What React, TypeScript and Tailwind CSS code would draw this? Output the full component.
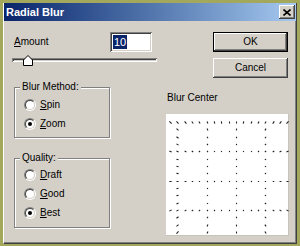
import React from 'react';

const raised =
  'shadow-[inset_-1px_-1px_#404040,inset_1px_1px_#ffffff,inset_-2px_-2px_#808080,inset_2px_2px_#d4d0c8]';
const sunken =
  'shadow-[inset_1px_1px_#808080,inset_-1px_-1px_#ffffff,inset_2px_2px_#404040,inset_-2px_-2px_#d4d0c8]';

function Radio({ checked }: { checked?: boolean }) {
  return (
    <span className="w-[12px] h-[12px] rounded-full border border-t-[#808080] border-l-[#808080] border-r-white border-b-white flex shrink-0">
      <span className="flex-1 rounded-full border border-t-[#404040] border-l-[#404040] border-r-[#d4d0c8] border-b-[#d4d0c8] bg-white flex items-center justify-center">
        {checked && <span className="w-[4px] h-[4px] rounded-full bg-black" />}
      </span>
    </span>
  );
}

function Option({ label, hot, checked }: { label: string; hot: string; checked?: boolean }) {
  return (
    <div className="h-[19px] flex items-center pl-[9px] gap-[4px]">
      <Radio checked={checked} />
      <span>
        <span className="underline underline-offset-[1px]">{hot}</span>
        {label.slice(1)}
      </span>
    </div>
  );
}

// Radial streak preview: dotted grid, each mark points away from the centre
function BlurPreview() {
  const cx = 66;
  const cy = 64;
  const step = 22 / 3;
  const pts: { x: number; y: number }[] = [];
  for (let r = 0; r < 4; r++)
    for (let i = 0; i < 17; i++) pts.push({ x: 4 + step * i, y: 8 + 4 * step * r });
  for (let c = 0; c < 4; c++)
    for (let j = 0; j < 16; j++) {
      if (j % 4 === 0) continue;
      pts.push({ x: 4 + step * (1 + 4 * c), y: 8 + step * j });
    }

  return (
    <svg width="123" height="122" viewBox="0 0 123 122">
      {pts.map((p, k) => {
        const x = Math.round(p.x) + 0.5;
        const y = Math.round(p.y) + 0.5;
        const dx = x - cx;
        const dy = y - cy;
        const d = Math.hypot(dx, dy) || 1;
        const len = Math.max(1.2, d * 0.038);
        const ux = (dx / d) * (len / 2);
        const uy = (dy / d) * (len / 2);
        return (
          <line
            key={k}
            x1={x - ux}
            y1={y - uy}
            x2={x + ux}
            y2={y + uy}
            stroke="#202020"
            strokeWidth="1.1"
          />
        );
      })}
    </svg>
  );
}

export default function App() {
  return (
    <div className="w-[300px] h-[246px] bg-[#a4a85c] pl-[3px] pt-[3px] font-['Liberation_Sans',Arial,sans-serif] text-[10px] leading-[12px] text-black">
      <div className="w-[294px] h-[241px] bg-[#d4d0c8] flex flex-col border-l border-l-white border-r border-r-[#404040] border-b border-b-[#404040] shadow-[inset_-1px_-1px_#808080]">
        {/* Title bar */}
        <div className="h-[18px] flex items-center bg-linear-to-r from-[#0a246a] to-[#a6caf0] pl-[2px] pr-[1px]">
          <span className="text-white font-bold text-[11px] leading-[14px]">Radial Blur</span>
          <button className={`ml-auto w-[16px] h-[14px] bg-[#d4d0c8] flex items-center justify-center ${raised}`}>
            <svg width="8" height="7" viewBox="0 0 8 7">
              <path d="M0.5 0.5 L7.5 6.5 M7.5 0.5 L0.5 6.5" stroke="#000" strokeWidth="1.6" />
            </svg>
          </button>
        </div>

        <div className="flex pl-[8px] pt-[11px]">
          {/* Left column */}
          <div className="w-[146px] flex flex-col">
            <div className="h-[20px] flex items-center">
              <span className="ml-[2px]">
                <span className="underline underline-offset-[1px]">A</span>mount
              </span>
              <div className={`ml-auto mr-[6px] w-[42px] h-[20px] bg-white flex items-center pl-[3px] ${sunken}`}>
                <span className="bg-[#0a246a] text-white text-[11px] leading-[14px] px-[1px]">10</span>
              </div>
            </div>

            <div className="mt-[3px] h-[10px] w-[145px] relative flex items-center">
              <div className={`w-full h-[4px] bg-[#d4d0c8] ${sunken}`} />
              <svg className="absolute left-[11px] top-0" width="10" height="11" viewBox="0 0 10 11">
                <path d="M0.5 10.5 V5 L5 0.5 L9.5 5 V10.5 Z" fill="#fff" stroke="#000" strokeWidth="1" />
              </svg>
            </div>

            <fieldset className="mt-[16px] ml-[2px] w-[96px] border border-[#808080] shadow-[inset_1px_1px_#ffffff,1px_1px_#ffffff] pt-[2px] pb-[4px]">
              <legend className="ml-[5px] px-[2px] bg-[#d4d0c8] leading-[12px]">Blur Method:</legend>
              <Option label="Spin" hot="S" />
              <Option label="Zoom" hot="Z" checked />
            </fieldset>

            <fieldset className="mt-[14px] ml-[2px] w-[96px] border border-[#808080] shadow-[inset_1px_1px_#ffffff,1px_1px_#ffffff] pt-[1px] pb-[5px]">
              <legend className="ml-[5px] px-[2px] bg-[#d4d0c8] leading-[12px]">Quality:</legend>
              <Option label="Draft" hot="D" />
              <Option label="Good" hot="G" />
              <Option label="Best" hot="B" checked />
            </fieldset>
          </div>

          {/* Right column */}
          <div className="w-[123px] ml-[8px] flex flex-col">
            <div className="flex flex-col items-end mr-[1px] gap-[6px]">
              <button className={`w-[75px] h-[20px] bg-[#d4d0c8] border border-black ${raised}`}>OK</button>
              <button className={`w-[75px] h-[20px] bg-[#d4d0c8] ${raised}`}>Cancel</button>
            </div>
            <span className="mt-[14px] ml-[1px]">Blur Center</span>
            <div className="mt-[10px] w-[123px] h-[122px] bg-white border-r border-b border-[#c8c4bc]">
              <BlurPreview />
            </div>
          </div>
        </div>
      </div>
    </div>
  );
}
